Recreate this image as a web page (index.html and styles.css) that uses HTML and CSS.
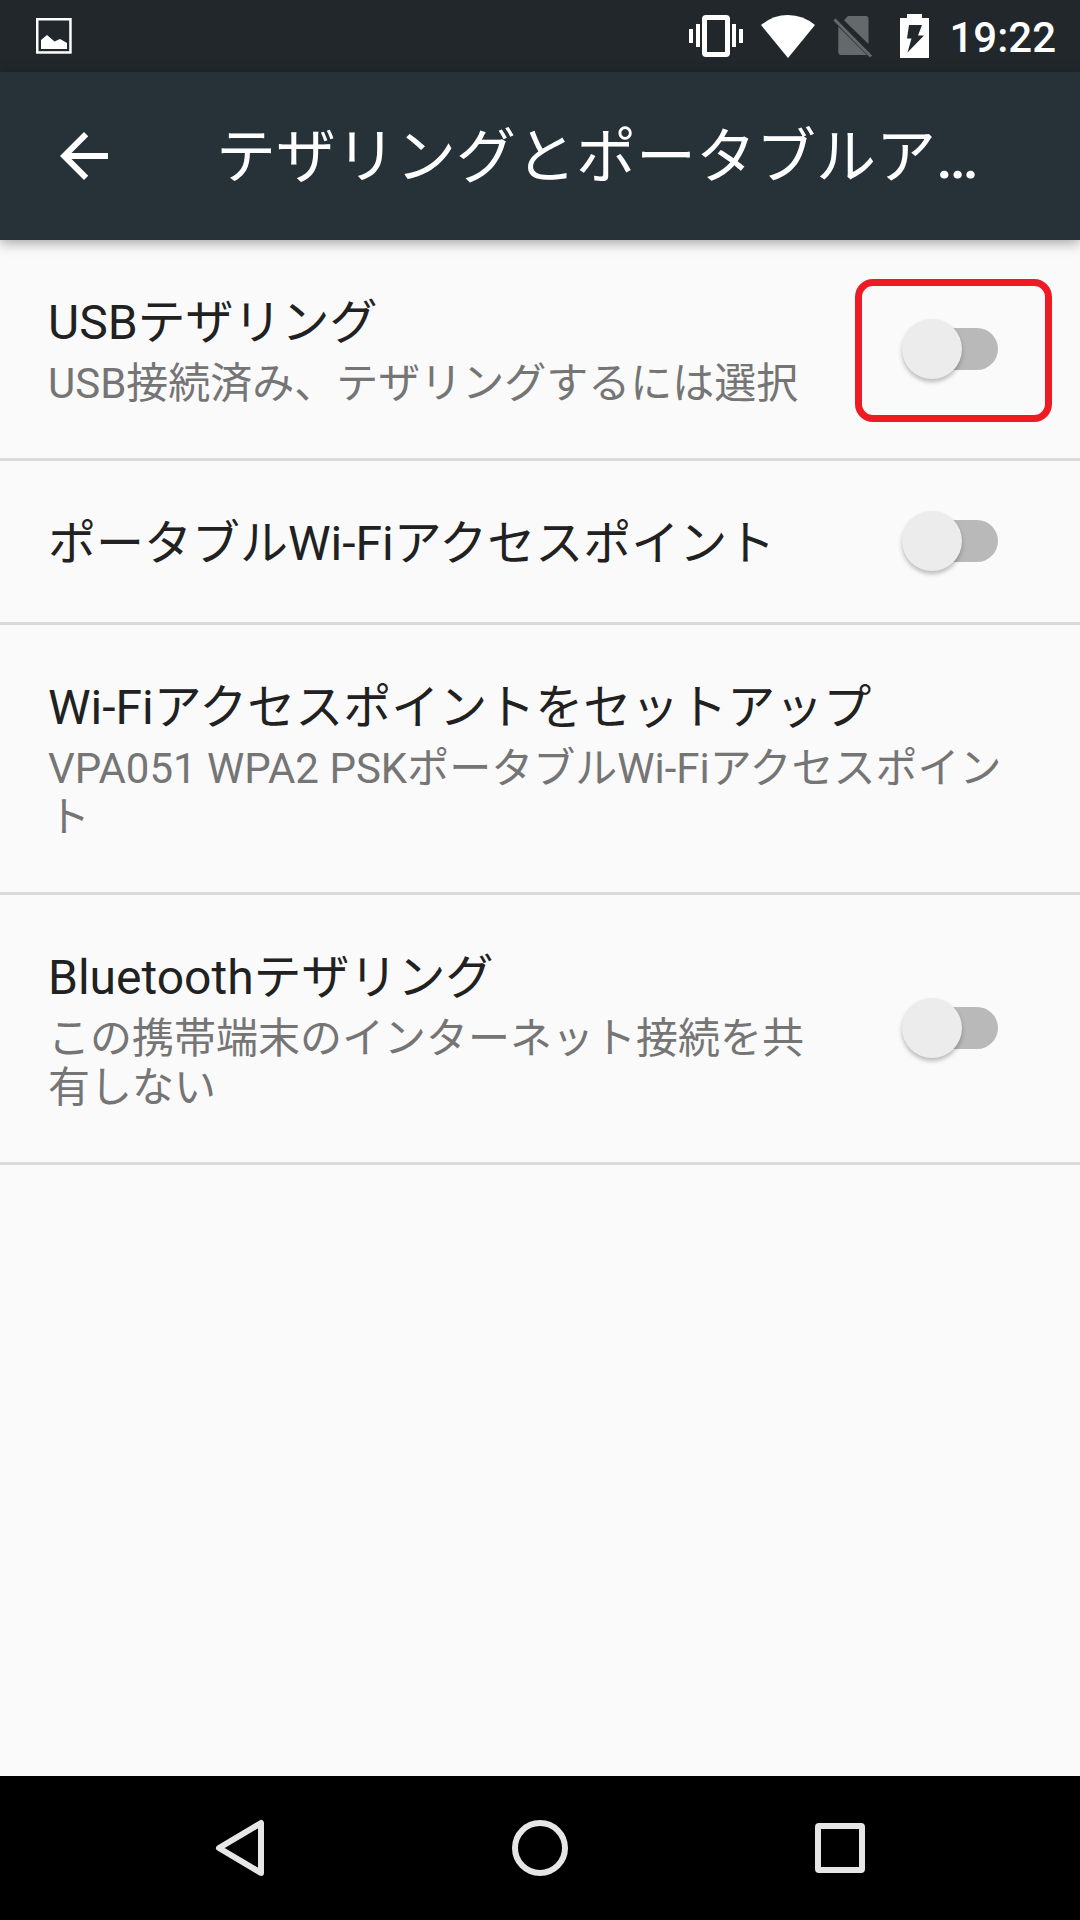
FILE: index.html
```html
<!DOCTYPE html>
<html lang="ja">
<head>
    <meta charset="UTF-8">
    <meta name="viewport" content="width=device-width, initial-scale=1.0">
    <title>テザリングとポータブルアクセスポイント</title>
    <link rel="stylesheet" href="styles.css">
</head>
<body>
    <div class="status-bar">
        <svg class="picture-icon" width="36" height="36" viewBox="0 0 36 36">
            <rect x="1.25" y="1.25" width="33.2" height="33.2" fill="none" stroke="#fff" stroke-width="2.5"/>
            <path d="M5 22l6-5 7.5 6.5 5.5-2.5 7 4v6H5z" fill="#fff"/>
        </svg>
        <div class="status-icons">
            <svg width="54" height="42" viewBox="0 0 54 42" fill="#fff">
                <path d="M0 14h4v14H0zM7 9h4v23H7zM43 9h4v23h-4zM50 14h4v14h-4z"/>
                <path fill-rule="evenodd" d="M17 0h20q4 0 4 4v34q0 4-4 4H17q-4 0-4-4V4q0-4 4-4zM18 5v32h18V5z"/>
            </svg>
            <svg width="54" height="43" viewBox="0 0 54 43">
                <path d="M0 10Q12 0 27 0t27 10L27 43z" fill="#fff"/>
            </svg>
            <svg width="40" height="44" viewBox="0 0 40 44">
                <path d="M15 2h17.500q3 0 3 3v25L11 6.300zM5.300 12.500l28.500 28.500H8.300q-3 0-3-3z" fill="#64696c"/>
                <path d="M1.500 5.500L38 42.500" stroke="#64696c" stroke-width="3"/>
            </svg>
            <svg width="29" height="44" viewBox="0 0 29 44">
                <path d="M7 0h15v4h7v40H0V4h7z" fill="#fff"/>
                <path d="M9 11h13l-4 10.500h6L7.500 38.500l4-14H7z" fill="#21272b"/>
            </svg>
        </div>
        <span class="clock">19:22</span>
    </div>

    <header>
        <svg class="back" width="72" height="72" viewBox="0 0 24 24">
            <path d="M20 11H7.83l5.59-5.59L12 4l-8 8 8 8 1.41-1.41L7.83 13H20v-2z" fill="#fff"/>
        </svg>
        <h1>テザリングとポータブルア<span class="dots">…</span></h1>
    </header>

    <main>
        <div class="item">
            <div class="text">
                <h2>USBテザリング</h2>
                <p>USB接続済み、テザリングするには選択</p>
            </div>
            <div class="switch">
                <div class="thumb"></div>
                <div class="highlight"></div>
            </div>
        </div>
        <div class="item">
            <div class="text">
                <h2>ポータブルWi-Fiアクセスポイント</h2>
            </div>
            <div class="switch">
                <div class="thumb"></div>
            </div>
        </div>
        <div class="item">
            <div class="text">
                <h2>Wi-Fiアクセスポイントをセットアップ</h2>
                <p>VPA051 WPA2 PSKポータブルWi-Fiアクセスポイント</p>
            </div>
        </div>
        <div class="item">
            <div class="text">
                <h2>Bluetoothテザリング</h2>
                <p>この携帯端末のインターネット接続を共有しない</p>
            </div>
            <div class="switch">
                <div class="thumb"></div>
            </div>
        </div>
    </main>

    <nav>
        <svg width="60" height="60" viewBox="0 0 60 60">
            <path d="M51 5v50L9 30z"/>
        </svg>
        <svg width="60" height="60" viewBox="0 0 60 60">
            <circle cx="30" cy="30" r="25"/>
        </svg>
        <svg width="60" height="60" viewBox="0 0 60 60">
            <rect x="8" y="8" width="44" height="44" rx="1"/>
        </svg>
    </nav>
</body>
</html>
```
FILE: styles.css
```css
* {
    box-sizing: border-box;
}

body {
    margin: 0;
    height: 1920px;
    display: flex;
    flex-direction: column;
    font-family: Roboto, "Noto Sans CJK JP", sans-serif;
    background-color: #fafafa;
    overflow: hidden;
}

h1, h2, p {
    margin: 0;
    font-weight: 400;
}

.status-bar {
    height: 72px;
    display: flex;
    align-items: center;
    padding: 0 24px 0 36px;
    background-color: #21272b;
    color: white;
}

.status-icons {
    display: flex;
    align-items: center;
    margin-left: auto;
}

.status-icons svg + svg {
    margin-left: 18px;
}

.status-icons svg:last-child {
    margin-left: 27px;
}

.clock {
    margin-left: 20px;
    padding-top: 3px;
    font-size: 42px;
    font-weight: 500;
    line-height: 50px;
}

header {
    height: 168px;
    display: flex;
    align-items: center;
    padding-left: 48px;
    background-color: #263238;
    color: white;
    box-shadow: 0 3px 12px rgba(0, 0, 0, 0.35);
}

header h1 {
    margin-left: 96px;
    padding-top: 4px;
    font-size: 60px;
    line-height: 72px;
    white-space: nowrap;
}

.dots {
    font-weight: 500;
}

main {
    flex: 1;
}

.item {
    display: flex;
    align-items: center;
    padding-right: 72px;
    border-bottom: 3px solid #dadada;
}

.text {
    flex: 1;
    padding: 55px 0 50px 48px;
}

h2 {
    font-size: 48px;
    line-height: 56px;
    color: #212121;
}

.text p {
    margin-top: 8px;
    font-size: 42px;
    line-height: 49px;
    color: #757575;
}

.switch {
    position: relative;
    width: 84px;
    height: 42px;
    margin: 0 10px 1px 100px;
    border-radius: 21px;
    background-color: #b9b9b9;
}

.thumb {
    position: absolute;
    left: -12px;
    top: -9px;
    width: 60px;
    height: 60px;
    border-radius: 50%;
    background-color: #ececec;
    box-shadow: 0 3px 4px rgba(0, 0, 0, 0.25);
}

/* red frame around the USB switch */
.highlight {
    position: absolute;
    left: -59px;
    top: -49px;
    width: 197px;
    height: 143px;
    border: 7px solid #ed1c24;
    border-radius: 18px;
}

nav {
    height: 144px;
    display: flex;
    justify-content: center;
    align-items: center;
    gap: 240px;
    background-color: black;
}

nav svg {
    fill: none;
    stroke: #e6e6e6;
    stroke-width: 6;
    stroke-linejoin: round;
}
```
